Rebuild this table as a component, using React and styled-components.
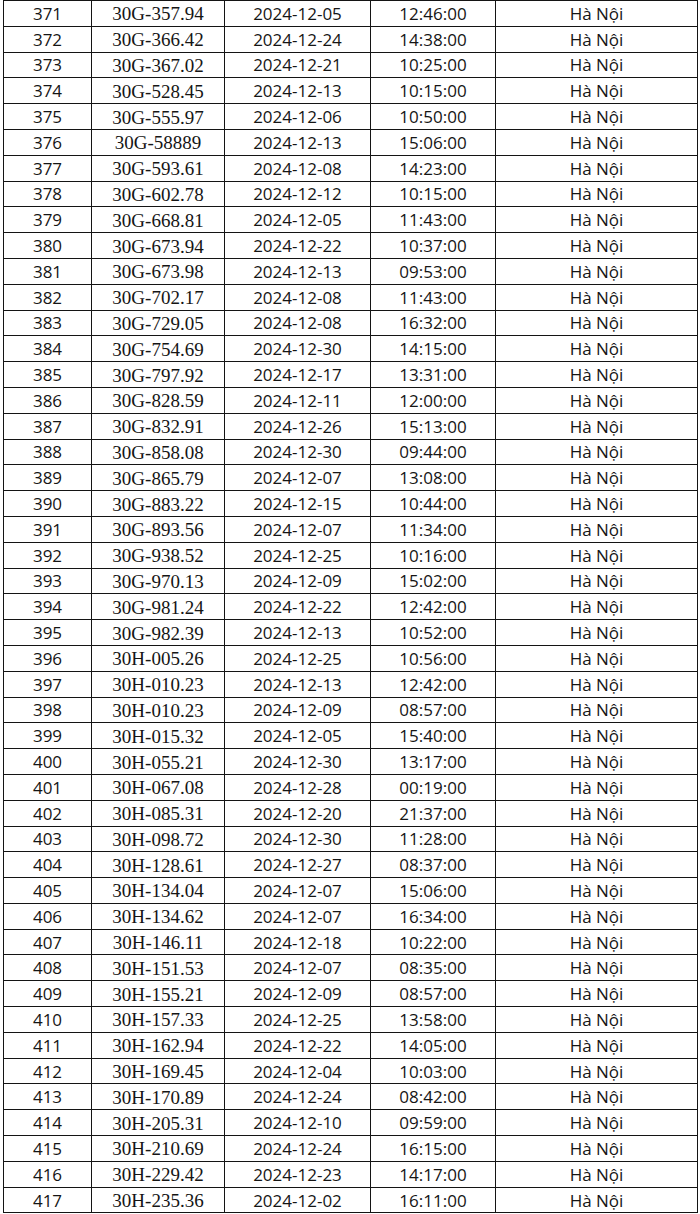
import styled, { createGlobalStyle } from "styled-components";

const GlobalStyle = createGlobalStyle`
  html, body {
    margin: 0;
    padding: 0;
    background: #ffffff;
  }
`;

// stt, bien so, ngay, gio
const rows = [
  ["371", "30G-357.94", "2024-12-05", "12:46:00"],
  ["372", "30G-366.42", "2024-12-24", "14:38:00"],
  ["373", "30G-367.02", "2024-12-21", "10:25:00"],
  ["374", "30G-528.45", "2024-12-13", "10:15:00"],
  ["375", "30G-555.97", "2024-12-06", "10:50:00"],
  ["376", "30G-58889", "2024-12-13", "15:06:00"],
  ["377", "30G-593.61", "2024-12-08", "14:23:00"],
  ["378", "30G-602.78", "2024-12-12", "10:15:00"],
  ["379", "30G-668.81", "2024-12-05", "11:43:00"],
  ["380", "30G-673.94", "2024-12-22", "10:37:00"],
  ["381", "30G-673.98", "2024-12-13", "09:53:00"],
  ["382", "30G-702.17", "2024-12-08", "11:43:00"],
  ["383", "30G-729.05", "2024-12-08", "16:32:00"],
  ["384", "30G-754.69", "2024-12-30", "14:15:00"],
  ["385", "30G-797.92", "2024-12-17", "13:31:00"],
  ["386", "30G-828.59", "2024-12-11", "12:00:00"],
  ["387", "30G-832.91", "2024-12-26", "15:13:00"],
  ["388", "30G-858.08", "2024-12-30", "09:44:00"],
  ["389", "30G-865.79", "2024-12-07", "13:08:00"],
  ["390", "30G-883.22", "2024-12-15", "10:44:00"],
  ["391", "30G-893.56", "2024-12-07", "11:34:00"],
  ["392", "30G-938.52", "2024-12-25", "10:16:00"],
  ["393", "30G-970.13", "2024-12-09", "15:02:00"],
  ["394", "30G-981.24", "2024-12-22", "12:42:00"],
  ["395", "30G-982.39", "2024-12-13", "10:52:00"],
  ["396", "30H-005.26", "2024-12-25", "10:56:00"],
  ["397", "30H-010.23", "2024-12-13", "12:42:00"],
  ["398", "30H-010.23", "2024-12-09", "08:57:00"],
  ["399", "30H-015.32", "2024-12-05", "15:40:00"],
  ["400", "30H-055.21", "2024-12-30", "13:17:00"],
  ["401", "30H-067.08", "2024-12-28", "00:19:00"],
  ["402", "30H-085.31", "2024-12-20", "21:37:00"],
  ["403", "30H-098.72", "2024-12-30", "11:28:00"],
  ["404", "30H-128.61", "2024-12-27", "08:37:00"],
  ["405", "30H-134.04", "2024-12-07", "15:06:00"],
  ["406", "30H-134.62", "2024-12-07", "16:34:00"],
  ["407", "30H-146.11", "2024-12-18", "10:22:00"],
  ["408", "30H-151.53", "2024-12-07", "08:35:00"],
  ["409", "30H-155.21", "2024-12-09", "08:57:00"],
  ["410", "30H-157.33", "2024-12-25", "13:58:00"],
  ["411", "30H-162.94", "2024-12-22", "14:05:00"],
  ["412", "30H-169.45", "2024-12-04", "10:03:00"],
  ["413", "30H-170.89", "2024-12-24", "08:42:00"],
  ["414", "30H-205.31", "2024-12-10", "09:59:00"],
  ["415", "30H-210.69", "2024-12-24", "16:15:00"],
  ["416", "30H-229.42", "2024-12-23", "14:17:00"],
  ["417", "30H-235.36", "2024-12-02", "16:11:00"],
];

const colWidths = [88, 133, 146, 125, 202];

const Page = styled.div`
  padding: 0 0 0 3px;
  width: 700px;
  box-sizing: border-box;
`;

const Table = styled.table`
  width: 694px;
  table-layout: fixed;
  border-collapse: collapse;
  border: 1.8px solid #111111;
  color: #151515;
`;

const Col = styled.col`
  width: ${(p) => p.$w}px;
`;

const Row = styled.tr`
  height: 25.8px;
`;

const Cell = styled.td`
  border: 1.5px solid #141414;
  padding: 0;
  text-align: center;
  vertical-align: middle;
  line-height: 1;
  white-space: nowrap;
  font-family: ${(p) =>
    p.$serif
      ? '"Liberation Serif", "Times New Roman", serif'
      : '"Open Sans", "Noto Sans", sans-serif'};
  font-size: ${(p) => (p.$serif ? "19px" : "17px")};
  padding-top: ${(p) => (p.$serif ? "1px" : "0")};
`;

function App() {
  return (
    <Page>
      <GlobalStyle />
      <Table>
        <colgroup>
          {colWidths.map((w, i) => (
            <Col key={i} $w={w} />
          ))}
        </colgroup>
        <tbody>
          {rows.map(([no, plate, date, time]) => (
            <Row key={no}>
              <Cell>{no}</Cell>
              <Cell $serif>{plate}</Cell>
              <Cell>{date}</Cell>
              <Cell>{time}</Cell>
              <Cell>Hà Nội</Cell>
            </Row>
          ))}
        </tbody>
      </Table>
    </Page>
  );
}

export default App;
